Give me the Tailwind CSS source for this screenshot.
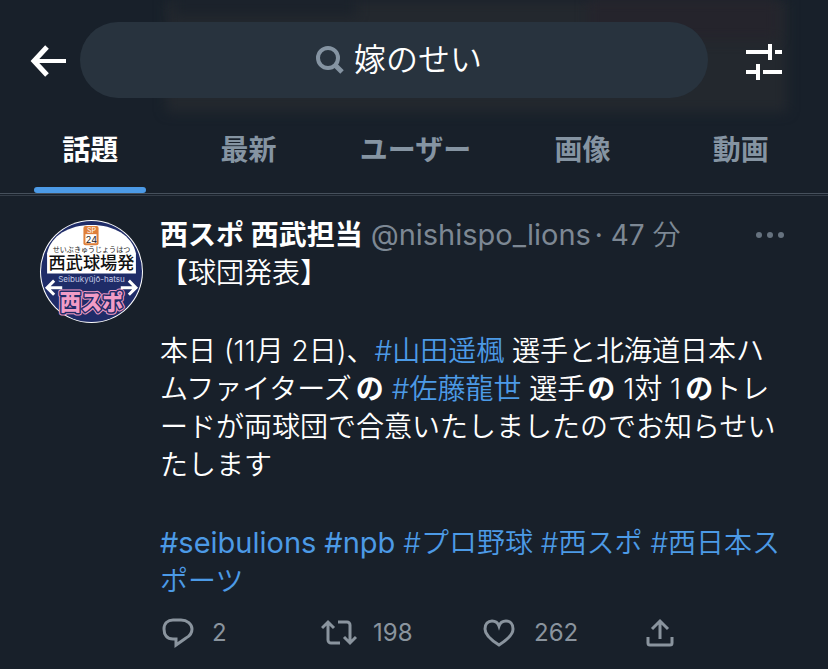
<!DOCTYPE html>
<html lang="ja">
<head>
    <meta charset="UTF-8">
    <meta name="viewport" content="width=device-width, initial-scale=1.0">
    <title>嫁のせい - 検索</title>
    <script src="https://cdn.jsdelivr.net/npm/@tailwindcss/browser@4"></script>
</head>
<body class="min-h-screen bg-[#18202a] text-white text-[28px] leading-[38px] font-['Inter','Noto_Sans_CJK_JP',sans-serif]">

    <header class="relative overflow-hidden border-b border-[#46505c]">
        <!-- content scrolled under the bar -->
        <div class="absolute inset-0" aria-hidden="true">
            <div class="absolute left-[20%] right-[5%] top-0 h-28 bg-[#23282e] blur-[6px]"></div>
            <div class="absolute left-[21%] right-[57%] -top-4 h-8 bg-[#1b222b] blur-[6px]"></div>
            <div class="absolute left-[71%] right-[6%] top-0 h-10 bg-[#25242c] blur-[6px]"></div>
        </div>

        <div class="relative flex items-center pt-[22px] pl-[30px] pr-[46px]">
            <button type="button" aria-label="戻る" class="w-[50px] shrink-0">
                <svg class="block w-9 h-8 mt-px" viewBox="0 0 36 32" fill="none" stroke="#fff">
                    <path stroke-width="4" d="M36 16H4" />
                    <path stroke-width="5" d="M17 2L4 16l13 14" />
                </svg>
            </button>
            <label class="flex-1 h-[76px] pl-2 flex items-center justify-center gap-2 rounded-full bg-[#28333e]">
                <svg class="w-8 h-8" viewBox="0 0 32 32" fill="none" stroke="#8594a2" stroke-width="4">
                    <circle cx="14" cy="14" r="10" />
                    <path stroke-width="5" d="M21 21l7 7" />
                </svg>
                <input type="text" value="嫁のせい" aria-label="検索" class="w-32 text-[32px] leading-10 font-[350] outline-none">
            </label>
            <button type="button" aria-label="フィルター" class="ml-[38px]">
                <svg class="block w-9 h-9 mt-1" viewBox="0 0 36 36" fill="#fff">
                    <path d="M0 6h22V0h4v16h-4v-6H0zM29 6h7v4h-7zM0 26h10v-6h4v16h-4v-6H0zM17 26h19v4H17z" />
                </svg>
            </button>
        </div>

        <nav class="relative grid grid-cols-[9fr_9fr_10fr_9fr_9fr] pl-[11px] pr-2 font-bold text-[#8594a2]">
            <a href="#" class="flex flex-col items-center pt-[33px] text-white">話題<span class="mt-[18px] w-28 h-[6px] rounded-full bg-[#4c9ae6]"></span></a>
            <a href="#" class="pt-[33px] text-center">最新</a>
            <a href="#" class="pt-[33px] text-center">ユーザー</a>
            <a href="#" class="pt-[33px] text-center">画像</a>
            <a href="#" class="pt-[33px] text-center">動画</a>
        </nav>
    </header>

    <main class="mt-px border-t border-[#343d48]">
        <article class="flex gap-4 pt-5 pb-5 pl-[39px] pr-6 border-b border-black">
            <svg class="w-[105px] h-[105px] mt-[3px] shrink-0" viewBox="0 0 104 104" role="img" aria-label="西スポ 西武担当">
                <defs>
                    <clipPath id="avatar"><circle cx="52" cy="52" r="50" /></clipPath>
                </defs>
                <circle cx="52" cy="52" r="51" fill="#fff" />
                <g clip-path="url(#avatar)">
                    <path fill="#1f2c68" d="M0 0h104v104H0z" />
                    <path fill="#fff" d="M8 54V34C12 16 30 6 52 6s40 10 44 28v20z" />
                </g>
                <rect x="44" y="7" width="15" height="19" rx="2" fill="#e0803a" />
                <path fill="#fff" d="M46 15h11v9H46z" />
                <g text-anchor="middle" class="font-['Inter','Noto_Sans_CJK_JP',sans-serif]">
                    <text x="52" y="14" font-size="7" fill="#fff">SP</text>
                    <text x="52" y="24" font-size="9" fill="#222">24</text>
                    <text x="52" y="33" font-size="7" fill="#222">せいぶきゅうじょうはつ</text>
                    <text x="52" y="50" font-size="17" font-weight="500" fill="#111">西武球場発</text>
                    <text x="52" y="62" font-size="8" fill="#c5cbe6">Seibukyūjō-hatsu</text>
                    <text x="52" y="90" font-size="21" font-weight="900" fill="#f19cc6" stroke="#f19cc6" stroke-width="5" stroke-linejoin="round">西スポ</text>
                    <text x="52" y="90" font-size="21" font-weight="900" fill="#f19cc6" stroke="#1f2c68" stroke-width="3" stroke-linejoin="round">西スポ</text>
                    <text x="52" y="90" font-size="21" font-weight="900" fill="#f19cc6">西スポ</text>
                </g>
                <path d="M23 68H8m7-7l-7 7 7 7M81 68h15m-7-7l7 7-7 7" fill="none" stroke="#fff" stroke-width="3" />
            </svg>

            <div class="flex-1 min-w-0">
                <div class="flex items-center whitespace-nowrap">
                    <a href="#" class="font-bold">西スポ 西武担当</a>
                    <span class="ml-2 text-[29px] text-[#7d8894]">@nishispo_lions</span>
                    <span class="ml-1 text-[#7d8894]">· 47 <span class="font-[350]">分</span></span>
                    <button type="button" aria-label="その他" class="ml-auto mr-5">
                        <svg class="block w-7 h-2" viewBox="0 0 28 8" fill="#66727f">
                            <circle cx="3" cy="4" r="3" /><circle cx="14" cy="4" r="3" /><circle cx="25" cy="4" r="3" />
                        </svg>
                    </button>
                </div>

                <div class="flex flex-col gap-10 whitespace-nowrap font-[350]">
                    <p>【球団発表】</p>
                    <p>
                        本日 (11月 2日)、<a href="#" class="text-[#4c9ae6]">#山田遥楓</a> 選手と北海道日本ハ<br>
                        ムファイターズ<b class="ml-1 font-bold">の</b> <a href="#" class="text-[#4c9ae6]">#佐藤龍世</a> 選手<b class="ml-0.5 font-bold">の</b> 1対 1<b class="ml-1 font-bold">の</b>トレ<br>
                        ードが両球団で合意いたしましたのでお知らせい<br>
                        たします
                    </p>
                    <p class="text-[#4c9ae6]">
                        <a href="#" class="text-[29px] font-normal">#seibulions</a> <a href="#" class="text-[29px] font-normal">#npb</a> <a href="#">#プロ野球</a> <a href="#">#西スポ</a> <a href="#">#西日本ス<br>ポーツ</a>
                    </p>
                </div>

                <div class="grid grid-cols-4 mt-[17px] text-2xl text-[#8a949e]">
                    <button type="button" class="flex items-center gap-4">
                        <svg class="w-9 h-8" viewBox="0 0 36 32" fill="none" stroke="currentColor" stroke-width="3">
                            <path d="M13 3h8c6 0 11 4 11 9 0 4-2 7-6 9l-10 7v-6h-3C7 22 4 18 4 12S8 3 13 3z" />
                        </svg>
                        2
                    </button>
                    <button type="button" class="flex items-center gap-4">
                        <svg class="w-9 h-8" viewBox="0 0 36 32" fill="none" stroke="currentColor" stroke-width="3">
                            <path d="M1 11l6-6 6 6M7 5v18a3 3 0 0 0 3 3h9M35 20l-6 6-6-6M29 26V8a3 3 0 0 0-3-3h-9" />
                        </svg>
                        198
                    </button>
                    <button type="button" class="flex items-center gap-4">
                        <svg class="w-9 h-8" viewBox="0 0 36 32" fill="none" stroke="currentColor" stroke-width="3">
                            <path d="M17 28C9 23 3 18 3 12c0-5 3-8 7-8 3 0 6 2 7 5 1-3 4-5 7-5 4 0 7 3 7 8 0 6-6 11-14 16z" />
                        </svg>
                        262
                    </button>
                    <button type="button" aria-label="共有" class="flex items-center">
                        <svg class="w-8 h-8" viewBox="0 0 32 32" fill="none" stroke="currentColor" stroke-width="3">
                            <path d="M17 22V4M9 12l8-8 8 8M5 20v6a2 2 0 0 0 2 2h20a2 2 0 0 0 2-2v-6" />
                        </svg>
                    </button>
                </div>
            </div>
        </article>
    </main>

</body>
</html>
